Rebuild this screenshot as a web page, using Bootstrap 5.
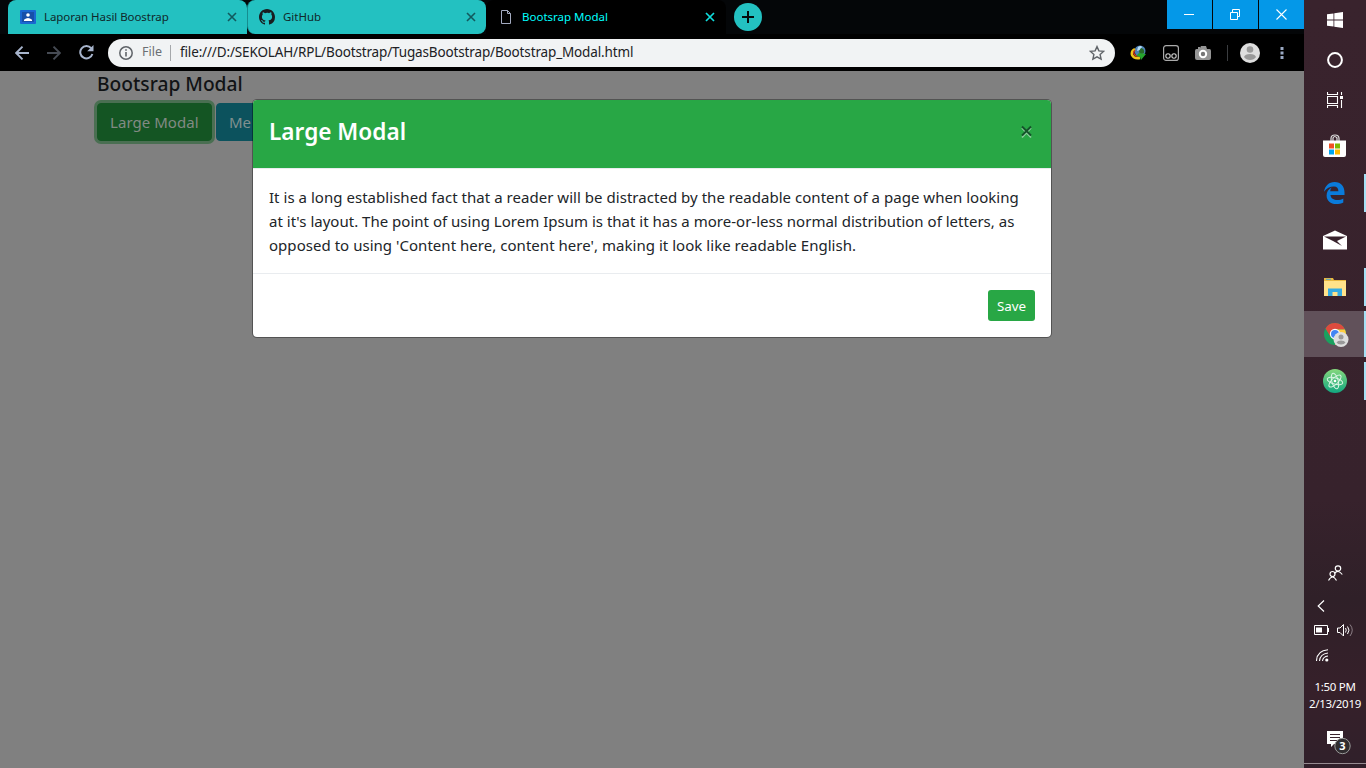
<!DOCTYPE html>
<html lang="en">
<head>
<meta charset="utf-8">
<meta name="viewport" content="width=device-width, initial-scale=1">
<title>Bootsrap Modal</title>
<link href="https://cdn.jsdelivr.net/npm/bootstrap@5.3.0/dist/css/bootstrap.min.css" rel="stylesheet">
<style>
body{width:1366px;height:768px;overflow:hidden;font-family:"Noto Sans","Open Sans",sans-serif;background:#000;color:#212529}
svg{display:block;flex:none}
.browser{width:1304px}
.tabstrip{height:34px;background:#040608;padding-left:8px}
.tab{width:239px;height:34px;background:#23c1c1;border-radius:8px 8px 0 0;font-size:11.5px;color:#10282a;padding:0 10px 0 12px;white-space:nowrap}
.tab-first{letter-spacing:-.06px}
.tab-second{border-radius:8px;border-left:1px solid #158d8f;padding-left:11px}
.tab-active{background:#000;color:#0ff;width:240px;padding-right:11px}
.newtab{width:28px;height:28px;margin:3px 0 0 8px;background:#23c1c1}
.winbtn{width:45px;height:29px;background:#0498e8;margin-left:1px;padding-right:1px}
.toolbar{height:37px;background:#000}
.omnibox{width:1007px;height:28px;background:#f1f3f4;border-radius:14px;margin-left:14px;padding:0 10px 0 11px;font-size:12.5px;color:#202124}
.url{font-size:13.5px;letter-spacing:-.145px}
.page{background:#808080;overflow:hidden}
.page-inner{padding:0 0 0 97px}
.page-title{font-size:19.2px;line-height:24px;font-weight:500;color:#111315;padding-top:1px;margin:0 0 7px}
.dim{height:38px;font-size:15px;line-height:24px;padding:6px 12px;border:1px solid;border-radius:4px;white-space:nowrap}
.dim-green{background:#145523;border-color:#145523;box-shadow:0 0 0 3px #4a6f52;width:115px;color:#828a83;letter-spacing:.05px}
.dim-teal{background:#0c525d;border-color:#0c525d;width:44px;margin-left:4px;color:#80908f;padding-right:0}
.dialog-wrap{position:absolute;top:28px;left:252px;width:800px}
.modal-content{background:#fff;color:#212529;border:1px solid rgba(0,0,0,.35);border-radius:5px;background-clip:padding-box;overflow:hidden}
.modal-header{background:#28a745;height:69px;padding:16px;border-bottom:1px solid #e9ecef;border-radius:0}
.modal-title{color:#fff;font-size:22.6px;font-weight:600;line-height:32px}
.modal-body{font-size:15px;line-height:24px;padding:16px;height:104px;white-space:nowrap;letter-spacing:.034px}
.modal-body .middle{letter-spacing:.01px}
.modal-footer{padding:16px;height:64px;border-top:1px solid #e9ecef}
.modal-footer .save{background:#28a745;color:#fff;width:47px;height:31px;font-size:13.4px;padding:2px 0 0;border-radius:3px;margin:0;border:0;line-height:1.5}
.taskbar{width:62px;background:linear-gradient(#39232d,#37222c 65%,#2f2028 78%,#36202a 90%,#30202a);color:#fff}
.launch{height:40px}
.app{height:46px;margin-bottom:1px;width:62px;padding-right:1px}
.open-app{background:linear-gradient(#a5e1f5,#a5e1f5) right center/2px 38px no-repeat}
.current-app{background:linear-gradient(#a5e1f5,#a5e1f5) right center/2px 46px no-repeat,#61515a;padding:2px 0 0 2px}
.clock{font-size:11.5px;line-height:17px;white-space:nowrap;letter-spacing:-.3px}
</style>
</head>
<body>
<div class="d-flex h-100">
<main class="browser d-flex flex-column h-100">
  <div class="tabstrip d-flex align-items-start">
    <div class="tab tab-first d-flex align-items-center">
      <svg width="16" height="14" viewBox="0 0 16 14"><rect width="16" height="14" rx="1" fill="#1967d2"/><rect x="2" y="2" width="12" height="10" fill="#174fa8"/><circle cx="8" cy="5" r="1.8" fill="#fff"/><path d="M4 11V9.8Q8 6 12 9.8V11z" fill="#fff"/></svg>
      <span class="ms-2">Laporan Hasil Boostrap</span>
      <svg class="ms-auto" width="10" height="10" viewBox="0 0 10 10"><path d="M1 1l8 8M9 1l-8 8" stroke="#12595d" stroke-width="1.6"/></svg>
    </div>
    <div class="tab tab-second d-flex align-items-center">
      <svg width="16" height="16" viewBox="0 0 16 16"><path fill="#191d20" d="M8 0C3.58 0 0 3.58 0 8c0 3.54 2.29 6.53 5.47 7.59.4.07.55-.17.55-.38 0-.19-.01-.82-.01-1.49-2.01.37-2.53-.49-2.69-.94-.09-.23-.48-.94-.82-1.13-.28-.15-.68-.52-.01-.53.63-.01 1.08.58 1.23.82.72 1.21 1.87.87 2.33.66.07-.52.28-.87.51-1.07-1.78-.2-3.64-.89-3.64-3.95 0-.87.31-1.59.82-2.15-.08-.2-.36-1.02.08-2.12 0 0 .67-.21 2.2.82A7.5 7.5 0 018 3.87c.68 0 1.36.09 2 .26 1.53-1.04 2.2-.82 2.2-.82.44 1.1.16 1.92.08 2.12.51.56.82 1.27.82 2.15 0 3.07-1.87 3.75-3.65 3.95.29.25.54.73.54 1.48 0 1.07-.01 1.93-.01 2.2 0 .21.15.46.55.38A8.01 8.01 0 0016 8c0-4.42-3.58-8-8-8z"/></svg>
      <span class="ms-2">GitHub</span>
      <svg class="ms-auto" width="10" height="10" viewBox="0 0 10 10"><path d="M1 1l8 8M9 1l-8 8" stroke="#12595d" stroke-width="1.6"/></svg>
    </div>
    <div class="tab tab-active d-flex align-items-center">
      <svg width="16" height="16" viewBox="0 0 16 16"><path d="M3.5 1.500h6l3 3v10h-9zM9.500 1.500v3h3" fill="none" stroke="#a3aac0"/></svg>
      <span class="ms-2">Bootsrap Modal</span>
      <svg class="ms-auto" width="10" height="10" viewBox="0 0 10 10"><path d="M1 1l8 8M9 1l-8 8" stroke="#0fdede" stroke-width="1.7"/></svg>
    </div>
    <div class="newtab rounded-circle d-flex align-items-center justify-content-center"><svg width="12" height="12"><path d="M6 0v12M0 6h12" stroke="#050b0b" stroke-width="2"/></svg></div>
    <div class="d-flex ms-auto">
      <div class="winbtn d-flex align-items-center justify-content-center"><svg width="10" height="11"><path d="M0 5.500h10" stroke="#fff"/></svg></div>
      <div class="winbtn d-flex align-items-center justify-content-center"><svg width="11" height="11"><path d="M.5 3.500h7v7h-7zM2.500 3V.5h7v7H8" fill="none" stroke="#fff"/></svg></div>
      <div class="winbtn d-flex align-items-center justify-content-center"><svg width="11" height="11"><path d="M.5.5l10 10M10.500.5l-10 10" stroke="#fff" stroke-width="1.1"/></svg></div>
    </div>
  </div>
  <div class="toolbar d-flex align-items-center">
    <svg width="14" height="14" style="margin-left:15px" viewBox="0 0 14 14"><path d="M14 7H1.500M7.500.7L1.200 7l6.300 6.300" fill="none" stroke="#a8b5cd" stroke-width="1.9"/></svg>
    <svg width="14" height="14" style="margin-left:18px" viewBox="0 0 14 14"><path d="M0 7h12.500M6.500.7L12.800 7l-6.300 6.300" fill="none" stroke="#464b54" stroke-width="1.9"/></svg>
    <svg width="15" height="15" style="margin-left:18px" viewBox="0 0 15 15"><path d="M12.200 3.200A6.200 6.200 0 1013.400 9" fill="none" stroke="#a8b5cd" stroke-width="2"/><path d="M14.500 0v6.300H8.200z" fill="#a8b5cd"/></svg>
    <div class="omnibox d-flex align-items-center">
      <svg width="14" height="14" viewBox="0 0 14 14"><circle cx="7" cy="7" r="6.200" fill="none" stroke="#5f6368" stroke-width="1.500"/><path d="M7 6v4.500M7 3.200v1.600" stroke="#5f6368" stroke-width="1.600"/></svg>
      <span style="margin-left:9px;color:#6b6f73">File</span>
      <span style="width:1px;height:16px;background:#a5a8ab;margin:0 9px 0 8px"></span>
      <span class="url">file:///D:/SEKOLAH/RPL/Bootstrap/TugasBootstrap/Bootstrap_Modal.html</span>
      <svg class="ms-auto" width="16" height="16" viewBox="0 0 16 16"><path d="M8 1.600l1.900 4.300 4.700.5-3.500 3.100 1 4.700L8 11.800l-4.100 2.400 1-4.700-3.500-3.100 4.700-.5z" fill="none" stroke="#5f6368" stroke-width="1.400"/></svg>
    </div>
    <svg width="17" height="16" style="margin-left:15px" viewBox="0 0 17 16"><circle cx="10" cy="6" r="5.500" fill="#4d82b5"/><path d="M8 2q3-2 4 0l-2 3-3 1z" fill="#b7dcf5"/><path d="M11 3q4 1 3 5l-4 2-1-4z" fill="#276a27"/><path d="M5 4Q1 6 2 10q2 4 8 3" fill="none" stroke="#eec51b" stroke-width="2.500"/><path d="M5 5Q3 7 4 9q2 3 6 2" fill="none" stroke="#cc3b21" stroke-width="1.500"/><path d="M9 8l7 1-5 6-1-3-4-1z" fill="#26a52d"/></svg>
    <svg width="16" height="16" style="margin-left:16px" viewBox="0 0 16 16"><rect x=".6" y=".6" width="14.800" height="14.800" rx="2.500" fill="none" stroke="#aaa" stroke-width="1.200"/><circle cx="5" cy="11" r="2.200" fill="none" stroke="#ccc" stroke-width="1.100"/><circle cx="11" cy="11" r="2.200" fill="none" stroke="#ccc" stroke-width="1.100"/></svg>
    <svg width="16" height="14" style="margin-left:16px" viewBox="0 0 16 14"><path d="M1.500 3H3V1h2v1l1-2h5l1 3h2.500Q16 3 16 5v7q0 2-2 2H2q-2 0-2-2V5q0-2 1.500-2z" fill="#949494"/><circle cx="8" cy="8" r="3.200" fill="#777" stroke="#fff" stroke-width="2"/></svg>
    <span style="width:1px;height:16px;background:#3b3d40;margin:0 12px 0 16px"></span>
    <svg width="20" height="20" viewBox="0 0 20 20"><circle cx="10" cy="10" r="10" fill="#dedede"/><circle cx="10" cy="6.500" r="3.300" fill="#999"/><path d="M4 14q1-3 6-3t6 3q-2 3-6 3t-6-3z" fill="#999"/></svg>
    <svg width="4" height="14" style="margin-left:20px"><path d="M.5 1h3v3h-3zM.5 5.500h3v3h-3zM.5 10h3v3h-3z" fill="#9aa9c3"/></svg>
  </div>
  <section class="page position-relative flex-grow-1">
    <div class="page-inner">
      <h5 class="page-title">Bootsrap Modal</h5>
      <div class="d-flex"><div class="dim dim-green">Large Modal</div><div class="dim dim-teal">Me</div></div>
    </div>
    <div class="dialog-wrap">
      <div class="modal-content">
        <div class="modal-header d-flex align-items-start"><h4 class="modal-title">Large Modal</h4>
          <svg style="margin:9px 1px 0 0" width="14" height="14" viewBox="0 0 14 14"><path d="M2 3l9 9.500M11 3l-9 9.500" stroke="#8fd09f" stroke-width="1.800"/><path d="M2 1.500l9 9M11 1.500l-9 9" stroke="#14532a" stroke-width="1.900"/></svg></div>
        <div class="modal-body">It is a long established fact that a reader will be distracted by the readable content of a page when looking<br><span class="middle">at it's layout. The point of using Lorem Ipsum is that it has a more-or-less normal distribution of letters, as</span><br>opposed to using 'Content here, content here', making it look like readable English.</div>
        <div class="modal-footer"><button class="btn save">Save</button></div>
      </div>
    </div>
  </section>
</main>
<aside class="taskbar d-flex flex-column h-100">
  <div class="launch d-flex align-items-center justify-content-center"><svg width="16" height="16" viewBox="0 0 16 16"><path d="M0 2.300l6.500-.9v6.100H0zM7.300 1.200L16 0v7.500H7.300zM0 8.500h6.500v6.100L0 13.700zM7.300 8.500H16V16l-8.700-1.200z" fill="#fff"/></svg></div>
  <div class="launch d-flex align-items-center justify-content-center"><svg width="16" height="16"><circle cx="8" cy="8" r="6.900" fill="none" stroke="#fff" stroke-width="2"/></svg></div>
  <div class="launch d-flex align-items-center justify-content-center"><svg width="17" height="16"><path d="M.5 0v2.500h10V0M.5 16v-2.500h10V16M.5 4.500h10v7H.5zM14.500 0v3M14.500 8v8" fill="none" stroke="#fff" stroke-width="1.100"/><path d="M13 4h3v3h-3z" fill="#fff"/></svg></div>
  <div class="app d-flex align-items-center justify-content-center" style="margin-top:3px"><svg width="23" height="24" viewBox="0 0 23 24"><path d="M8 7V4.500q0-3.500 4-3.500t4 3.500V7M10 7V4q1.500-3 4 0v3" fill="none" stroke="#ddd" stroke-width="1.200"/><path d="M0 6.500h23V21q0 2-2 2H2q-2 0-2-2z" fill="#fff"/><path d="M6 9.500h5v5H6z" fill="#f25022"/><path d="M12 9.500h5v5h-5z" fill="#7fba00"/><path d="M6 15.500h5v5H6z" fill="#00a4ef"/><path d="M12 15.500h5v5h-5z" fill="#ffb900"/></svg></div>
  <div class="app open-app d-flex align-items-center justify-content-center"><svg width="21" height="22" viewBox="0 0 21 22"><path d="M0 9.700C.8 4 4.800 0 10.600 0 17 0 20.500 4.700 20.500 10.300V13H6.500c.2 3.600 3.500 5 6.800 5 2.400 0 4.200-.6 6-1.600V20.500c-2 1-4.400 1.500-7.200 1.500C6.600 22 2.600 18.700 2.600 13.400c0-3.300 1.800-6.300 5-7.900C6.700 6.700 6.300 8 6.200 9.200h8.200c0-3-1.400-4.700-4.400-4.700C6 4.500 2.300 6.400 0 9.700z" fill="#0a7bdb"/></svg></div>
  <div class="app d-flex align-items-center justify-content-center"><svg width="24" height="20" viewBox="0 0 24 20"><path d="M0 6L12 .5 24 6v13.500H0z" fill="#fff"/><path d="M1 6.500h22L14 11l5 5-9-5z" fill="#38222c"/></svg></div>
  <div class="app open-app d-flex align-items-center justify-content-center"><svg width="22" height="18" viewBox="0 0 22 18"><path d="M0 17V0h9l1 2h12v15z" fill="#e9b840"/><path d="M0 18V3h22v15z" fill="#ffe28a"/><path d="M2 .8h5v1H2z" fill="#4aa5cf"/><path d="M4 18v-7.500h14V18h-4.500v-4h-5v4z" fill="#35abe2"/></svg></div>
  <div class="app current-app d-flex align-items-center justify-content-center"><svg width="26" height="26" viewBox="0 0 26 26"><circle cx="12" cy="12" r="11" fill="#1aa15f"/><path d="M2.500 6.500A11 11 0 0122 7.500H12L7 14z" fill="#dd4b3e"/><path d="M12 7.500h10A11 11 0 0112 23l4-8z" fill="#ffcd42"/><circle cx="12" cy="12" r="5.200" fill="#fff"/><circle cx="12" cy="12" r="4" fill="#4285f4"/><circle cx="18" cy="17.500" r="7.500" fill="#dedede"/><circle cx="18" cy="15" r="2.500" fill="#999"/><path d="M13.500 20.500q1-2 4.500-2t4.500 2q-1 2-4.500 2t-4.500-2z" fill="#999"/></svg></div>
  <div class="app open-app d-flex align-items-center justify-content-center"><svg width="24" height="24" viewBox="0 0 24 24"><defs><linearGradient id="g" x2="0" y2="1"><stop stop-color="#86d87d"/><stop offset="1" stop-color="#12a780"/></linearGradient></defs><circle cx="12" cy="12" r="12" fill="url(#g)"/><g fill="none" stroke="#dcf5e5" stroke-width="1"><ellipse cx="12" cy="12" rx="8" ry="3.200" transform="rotate(15 12 12)"/><ellipse cx="12" cy="12" rx="8" ry="3.200" transform="rotate(75 12 12)"/><ellipse cx="12" cy="12" rx="8" ry="3.200" transform="rotate(135 12 12)"/></g><circle cx="12" cy="12" r="1.300" fill="#fff"/></svg></div>
  <div class="mt-auto d-flex flex-column" style="height:203px">
    <svg class="mx-auto" width="15" height="16" viewBox="0 0 15 16"><g fill="none" stroke="#fff" stroke-width="1.200"><circle cx="10" cy="3.500" r="2.700"/><path d="M6.500 8.500Q10 4 14.300 9.500"/><circle cx="4.500" cy="9" r="2.500"/><path d="M.5 15.500q4-7 8 0"/></g></svg>
    <svg style="margin:19px 0 0 13px" width="8" height="12" viewBox="0 0 8 12"><path d="M7 .5L1.200 6 7 11.500" fill="none" stroke="#fff" stroke-width="1.200"/></svg>
    <div class="d-flex align-items-center" style="margin:11px 0 0 10px"><svg width="15" height="10"><path d="M.5.5h13v9H.5z" fill="none" stroke="#fff"/><path d="M2 2.500h6v5H2zM14 3h1v4h-1z" fill="#fff"/></svg>
    <svg style="margin-left:8px" width="17" height="14" viewBox="0 0 17 14"><path d="M.5 5v4.500H3L6.500 13V1.500L3 5z" fill="none" stroke="#fff"/><path d="M8.500 5q1.500 2 0 4.500M10.500 3.500q3 3.500 0 7.500" fill="none" stroke="#fff"/><path d="M13 1.500q4.500 5.500 0 11.500" fill="none" stroke="#8b7e85"/></svg></div>
    <svg style="margin:12px 0 0 12px" width="13" height="13" viewBox="0 0 13 13"><g fill="none" stroke="#fff" stroke-width="1.100"><path d="M.5 12Q1 1.500 12 .8M3.500 12Q4 5 12 4M6.500 12Q7 7.500 12 7"/></g><circle cx="10.800" cy="11" r="1.600" fill="#fff"/></svg>
    <div class="clock text-center" style="margin-top:16px">1:50 PM<br>2/13/2019</div>
    <svg style="margin:18px 0 0 22px" width="26" height="26" viewBox="0 0 26 26"><path d="M1 1h16v13H8l-3 3v-3H1z" fill="#fff"/><path d="M4 4.500h10M4 7.500h10M4 10.500h7" stroke="#39232d" stroke-width="1.200"/><circle cx="16.500" cy="16" r="7.700" fill="#302c2f" stroke="#999" stroke-width="1"/><text x="16.500" y="20" text-anchor="middle" font-size="11" font-weight="700" fill="#fff">3</text></svg>
    <div class="mt-auto" style="height:1px;background:#968b91;margin-bottom:4px"></div>
  </div>
</aside>
</div>
<script src="https://cdn.jsdelivr.net/npm/bootstrap@5.3.0/dist/js/bootstrap.bundle.min.js"></script>
</body>
</html>
